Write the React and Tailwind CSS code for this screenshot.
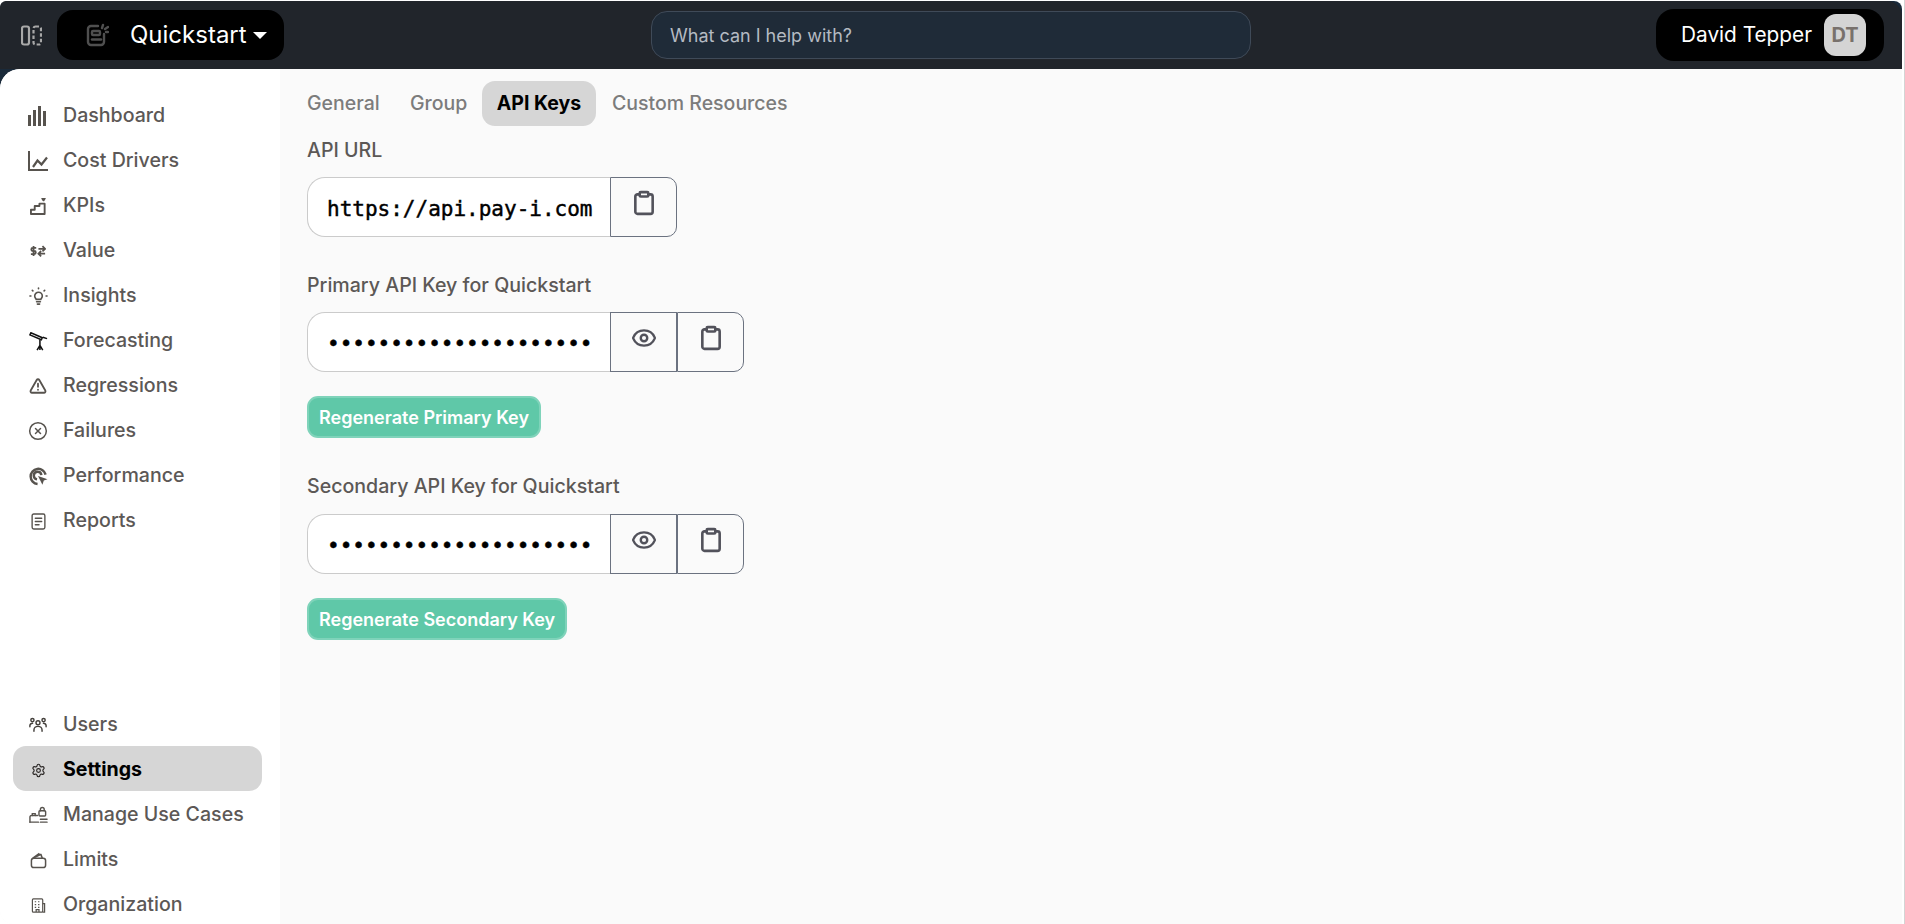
import { Clipboard, Eye, TriangleAlert, CircleX, Settings } from "lucide-react";

const Bars = ({ size }) => (
  <svg width={size} height={size} viewBox="0 0 20 20" fill="#57534e">
    <rect x="0" y="9" width="3" height="11" />
    <rect x="5" y="4" width="3" height="16" />
    <rect x="10" y="0" width="3" height="20" />
    <rect x="15" y="5" width="3" height="15" />
  </svg>
);

const LineChartIcon = ({ size }) => (
  <svg width={size} height={size} viewBox="0 0 20 20" fill="none" stroke="#57534e" strokeWidth="2">
    <path d="M1 0v19h19" />
    <path d="M5 16l4.500-6.500 4 4 5.500-7" strokeWidth="2.200" />
  </svg>
);

const Stairs = ({ size }) => (
  <svg width={size} height={size} viewBox="0 0 18 18" fill="none" stroke="#57534e" strokeWidth="2" strokeLinejoin="round">
    <path d="M1 17v-4.500h4v-4h5V6h5.500v11z" />
    <path d="M13 0.500l1.300 2 1.300-2z" fill="#57534e" />
  </svg>
);

const ValueIcon = ({ size }) => (
  <svg width={size} height={size} viewBox="0 0 18 18" fill="none" stroke="#57534e" strokeWidth="2">
    <path d="M7 5.500H3.200a1.700 1.700 0 0 0 0 3.500h1.600a1.700 1.700 0 0 1 0 3.500H1M4 3.500v11" />
    <path d="M9.500 6.500h7M14 3.500l3 3-3 3M17 12h-7M12.500 9l-3 3 3 3" />
  </svg>
);

const Bulb = ({ size }) => (
  <svg width={size} height={size} viewBox="0 0 20 20" fill="none" stroke="#57534e" strokeWidth="1.700" strokeLinecap="round">
    <path d="M6 9.500a4 4 0 1 1 8 0c0 1.600-1 2.400-1.600 3.500H7.600C7 11.900 6 11.100 6 9.500z" />
    <path d="M8 15.500h4M8.800 18h2.400" />
    <path d="M10 1v.8M3.500 3.500l.6.6M16.500 3.500l-.6.6M1 9.500h1M18 9.500h1" />
  </svg>
);

const Telescope = ({ size }) => (
  <svg width={size} height={size} viewBox="0 0 20 20" fill="none" stroke="#111" strokeWidth="1.600">
    <path d="M1 3l1-2.200 12 5.200-1 2.200z" fill="#fff" />
    <path d="M14.500 5.500l4.500 1.500" />
    <path d="M11.500 8v6M11.500 14l-3 5M11.500 14l3 5M11.500 14v5" />
  </svg>
);

const Target = ({ size }) => (
  <svg width={size} height={size} viewBox="0 0 20 20" fill="none" stroke="#57534e" strokeWidth="2.600">
    <path d="M17.500 8A8 8 0 1 0 9 17.900" />
    <path d="M13 8.500A4 4 0 1 0 8.500 13" />
    <path d="M9.500 9.500l10 3.300-3.900 1.500-1.500 4.500z" fill="#57534e" stroke="none" />
  </svg>
);

const ReportIcon = ({ size }) => (
  <svg width={size} height={size} viewBox="0 0 16 16" fill="none" stroke="#57534e" strokeWidth="1.300" strokeLinecap="round">
    <rect x="2" y="1" width="12" height="14" rx="1.500" />
    <path d="M5 5h6M5 8h6M5 11h3.500" />
  </svg>
);

const UsersIcon = ({ size }) => (
  <svg width={size} height={size} viewBox="0 0 20 20" fill="none" stroke="#44403c" strokeWidth="1.600" strokeLinecap="round">
    <circle cx="10" cy="7.500" r="2.200" />
    <circle cx="3.800" cy="4.500" r="1.800" />
    <circle cx="16.200" cy="4.500" r="1.800" />
    <path d="M5.500 17v-1.500a4.500 4 0 0 1 9 0V17" />
    <path d="M1 12v-1.500A3 3 0 0 1 4 8M19 12v-1.500A3 3 0 0 0 16 8" />
  </svg>
);

const UseCasesIcon = ({ size }) => (
  <svg width={size} height={size} viewBox="0 0 20 20" fill="none" stroke="#57534e" strokeWidth="1.500" strokeLinecap="round">
    <path d="M1 17v-5.500A1.500 1.500 0 0 1 2.500 10H9" />
    <path d="M1 17h9" />
    <path d="M3.500 10V8h3v2" />
    <rect x="10.500" y="5" width="7" height="5.500" rx="1" />
    <path d="M12 5V3.500a2 2 0 0 1 4 0V5" />
    <path d="M12 14h7M12 17h7" />
  </svg>
);

const WalletIcon = ({ size }) => (
  <svg width={size} height={size} viewBox="0 0 18 18" fill="none" stroke="#57534e" strokeWidth="1.600" strokeLinejoin="round">
    <rect x="1.500" y="6.500" width="15" height="10" rx="2.500" />
    <path d="M2.500 7l9-4.500 1.500 4M3 6.500L10 1.500" />
  </svg>
);

const BuildingIcon = ({ size }) => (
  <svg width={size} height={size} viewBox="0 0 16 16" fill="none" stroke="#57534e" strokeWidth="1.300">
    <rect x="1.500" y="1" width="11" height="14" rx="1" />
    <path d="M12.500 6h2v9h-2" />
    <path d="M4 4h1.500M7.500 4H9M4 7h1.500M7.500 7H9M4 10h1.500M7.500 10H9M5.500 15v-2.500h3V15" />
  </svg>
);

const topNav = [
  { label: "Dashboard", Icon: Bars, size: 20 },
  { label: "Cost Drivers", Icon: LineChartIcon, size: 20 },
  { label: "KPIs", Icon: Stairs, size: 17 },
  { label: "Value", Icon: ValueIcon, size: 16 },
  { label: "Insights", Icon: Bulb, size: 19 },
  { label: "Forecasting", Icon: Telescope, size: 19 },
  { label: "Regressions", Icon: (p) => <TriangleAlert {...p} color="#57534e" strokeWidth={2.4} />, size: 18 },
  { label: "Failures", Icon: (p) => <CircleX {...p} color="#57534e" strokeWidth={1.8} />, size: 20 },
  { label: "Performance", Icon: Target, size: 19 },
  { label: "Reports", Icon: ReportIcon, size: 17 },
];

const bottomNav = [
  { label: "Users", Icon: UsersIcon, size: 18 },
  { label: "Settings", Icon: (p) => <Settings {...p} color="#292524" strokeWidth={1.8} />, size: 15, active: true },
  { label: "Manage Use Cases", Icon: UseCasesIcon, size: 19 },
  { label: "Limits", Icon: WalletIcon, size: 17 },
  { label: "Organization", Icon: BuildingIcon, size: 15 },
];

const NavItem = ({ item }) => (
  <div
    className={`ml-[13px] mr-[18px] h-[45px] flex items-center pl-[13px] pt-[3px] gap-[13px] rounded-[13px] text-[19.6px] ${
      item.active ? "bg-[#d6d6d6] text-black font-bold" : "text-[#5c5856] font-medium"
    }`}
  >
    <span className="w-[24px] flex justify-center items-center shrink-0">
      <item.Icon size={item.size} />
    </span>
    {item.label}
  </div>
);

const KeyField = ({ value, showEye }) => (
  <div className="flex h-[60px]">
    <div className="w-[303px] bg-white border border-r-0 border-[#cbcbcb] rounded-l-[18px] pl-[19px] pt-[5px] flex items-center text-[21px] text-black overflow-hidden whitespace-nowrap font-['DejaVu_Sans_Mono',monospace] [-webkit-text-stroke:0.45px_black]">
      {value}
    </div>
    {showEye && (
      <div className="w-[67px] border border-[#6b7280] flex justify-center pt-[12px]">
        <Eye size={26} color="#52525b" strokeWidth={2.2} />
      </div>
    )}
    <div className="w-[67px] border border-[#6b7280] rounded-r-[10px] flex justify-center pt-[12px]">
      <Clipboard size={26} color="#52525b" strokeWidth={2.4} />
    </div>
  </div>
);

const GreenButton = ({ children }) => (
  <div className="inline-flex h-[42px] items-center px-[10px] rounded-[11px] bg-[#5fc8a8] border-2 border-[#7fd3ba] text-white font-semibold text-[18px]">
    {children}
  </div>
);

const Label = ({ children, className }) => (
  <div className={`text-[19.6px] font-medium leading-[27px] text-[#5c5856] ${className}`}>{children}</div>
);

const dots = "•".repeat(21);

export default function App() {
  return (
    <div className="h-screen w-full bg-white overflow-hidden pt-px pr-[2px] border-r border-[#d4d4d4] font-['Inter',sans-serif]">
      <div className="h-full flex flex-col rounded-t-[8px] bg-[linear-gradient(#1a2a3a_0_100px,white_100px)]">
        {/* top bar */}
        <header className="h-[68px] shrink-0 flex items-center justify-between pr-[18px] rounded-tl-[6px] rounded-tr-[15px] bg-[#21252b]">
          <div className="flex items-center">
            <svg className="ml-[21px]" width="21" height="21" viewBox="0 0 21 21" fill="none" stroke="#a8a8a8" strokeWidth="2.200">
              <rect x="1" y="1.500" width="7" height="18" rx="2" />
              <rect x="12.500" y="1.500" width="7.500" height="18" rx="2" strokeDasharray="3.500 2" />
            </svg>
            <div className="ml-[15px] w-[227px] h-[50px] bg-black rounded-[16px] flex items-center pl-[28px]">
              <svg width="24" height="24" viewBox="0 0 24 24" fill="none" stroke="#4f4f4f" strokeWidth="2.400" strokeLinecap="round">
                <path d="M13 3H6a3 3 0 0 0-3 3v13a3 3 0 0 0 3 3h10a3 3 0 0 0 3-3v-8" />
                <rect x="7" y="8" width="8" height="4" rx="1" />
                <path d="M7 16.500h9" />
                <path d="M18 2l-1 3M23 4l-3 2M23 9h-2" />
              </svg>
              <span className="ml-[21px] text-white text-[24px] leading-none">Quickstart</span>
              <span className="ml-[6px] w-0 h-0 border-x-[7px] border-x-transparent border-t-[7px] border-t-white" />
            </div>
          </div>
          <div className="mr-[38px] w-[600px] h-[48px] bg-[#1f2b38] border border-[#3f4a58] rounded-[16px] flex items-center pl-[18px] text-[18px] text-[#b4bac2]">
            What can I help with?
          </div>
          <div className="w-[228px] h-[52px] bg-black rounded-[18px] flex items-center justify-between pl-[25px] pr-[18px]">
            <span className="text-white text-[20.800px]">David Tepper</span>
            <div className="w-[42px] h-[42px] rounded-[12px] bg-[#d4d4d4] text-[#78716c] font-bold text-[20px] flex items-center justify-center">DT</div>
          </div>
        </header>

        {/* body */}
        <div className="flex-1 flex min-h-0 rounded-tl-[20px] rounded-bl-[14px] overflow-hidden bg-[#fafafa]">
          <aside className="w-[280px] shrink-0 bg-white flex flex-col justify-between pt-[23px]">
            <nav>
              {topNav.map((item) => (
                <NavItem key={item.label} item={item} />
              ))}
            </nav>
            <nav className="-mb-[2px]">
              {bottomNav.map((item) => (
                <NavItem key={item.label} item={item} />
              ))}
            </nav>
          </aside>

          <main className="flex-1 pl-[27px] pt-[12px]">
            <div className="flex items-center text-[19.5px] font-medium text-[#7c7c7c] h-[45px]">
              <span className="w-[103px]">General</span>
              <span className="w-[72px]">Group</span>
              <span className="w-[114px] h-[45px] rounded-[13px] bg-[#d6d6d6] text-black font-bold flex items-center justify-center">API Keys</span>
              <span className="ml-[16px]">Custom Resources</span>
            </div>

            <Label className="mt-[11px]">API URL</Label>
            <div className="mt-[13px]">
              <KeyField value="https://api.pay-i.com" />
            </div>

            <Label className="mt-[35px]">Primary API Key for Quickstart</Label>
            <div className="mt-[13px]">
              <KeyField value={dots} showEye />
            </div>
            <div className="mt-[24px]">
              <GreenButton>Regenerate Primary Key</GreenButton>
            </div>

            <Label className="mt-[35px]">Secondary API Key for Quickstart</Label>
            <div className="mt-[14px]">
              <KeyField value={dots} showEye />
            </div>
            <div className="mt-[24px]">
              <GreenButton>Regenerate Secondary Key</GreenButton>
            </div>
          </main>
        </div>
      </div>
    </div>
  );
}
